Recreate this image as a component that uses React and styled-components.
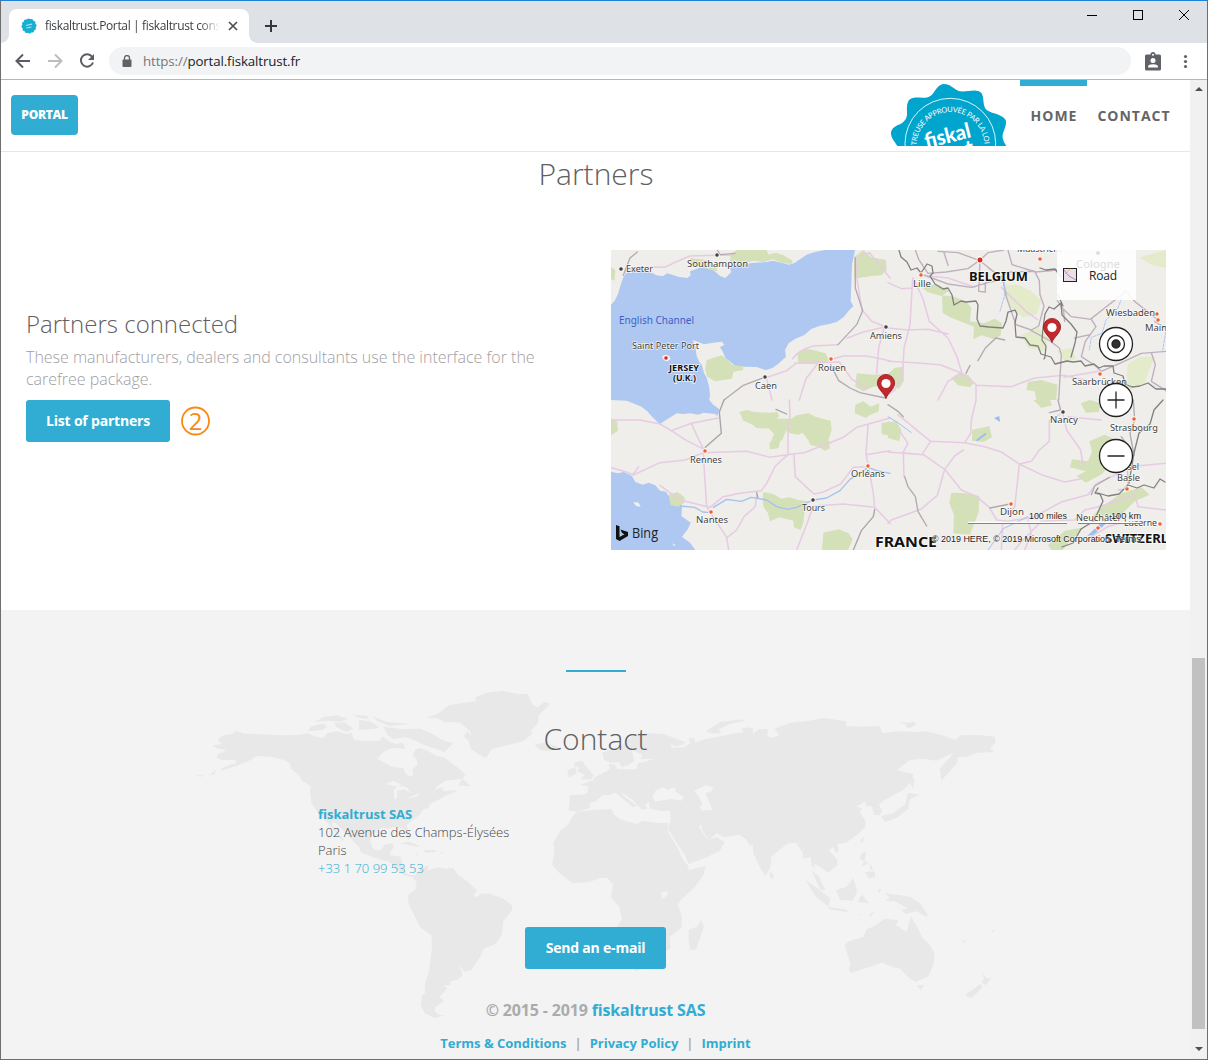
import React from "react";
import styled, { createGlobalStyle } from "styled-components";

const BLUE = "#31acd2";

const Global = createGlobalStyle`
  * { box-sizing: border-box; }
  body { margin: 0; background: #fff; }
  h1, h2, p { margin: 0; font-weight: 300; }
  a { color: inherit; text-decoration: none; }
  svg { display: block; }
`;

const Window = styled.div`
  width: 1208px;
  height: 1060px;
  display: flex;
  flex-direction: column;
  overflow: hidden;
  border: 1px solid #6e6e70;
  border-top-color: #1b82d6;
  font-family: "Open Sans", "Noto Sans", sans-serif;
`;

const TabStrip = styled.div`
  flex: none;
  height: 42px;
  display: flex;
  align-items: flex-start;
  padding: 8px 0 0 8px;
  background: #dee1e6;
`;

const Tab = styled.div`
  position: relative;
  width: 240px;
  height: 34px;
  display: flex;
  align-items: center;
  padding: 0 11px 0 12px;
  border-radius: 8px 8px 0 0;
  background: #fff;
  &::before,
  &::after {
    content: "";
    position: absolute;
    bottom: 0;
    width: 8px;
    height: 8px;
  }
  &::before { left: -8px; background: radial-gradient(circle at 0 0, transparent 7.5px, #fff 8px); }
  &::after { right: -8px; background: radial-gradient(circle at 100% 0, transparent 7.5px, #fff 8px); }
`;

const TabTitle = styled.span`
  width: 175px;
  margin: 0 8px 0 8px;
  overflow: hidden;
  white-space: nowrap;
  font: 12px/18px "Open Sans", sans-serif;
  letter-spacing: -0.36px;
  color: #3c4043;
  mask-image: linear-gradient(90deg, #000 155px, transparent 175px);
`;

const NewTab = styled.div`
  margin: 11px 0 0 16px;
`;

const WindowButtons = styled.div`
  margin-left: auto;
  display: flex;
  gap: 35px;
  padding: 0 17px 0 0;
`;

const Toolbar = styled.div`
  flex: none;
  height: 37px;
  display: flex;
  align-items: center;
  padding: 0 14px;
  border-bottom: 1px solid #b6b6b8;
  background: #fff;
`;

const NavIcons = styled.div`
  display: flex;
  gap: 16px;
  width: 94px;
`;

const AddressBar = styled.div`
  flex: 1;
  height: 28px;
  display: flex;
  align-items: center;
  gap: 11px;
  padding-left: 13px;
  border-radius: 14px;
  background: #f1f3f4;
  font: 13.3px/20px "Open Sans", sans-serif;
  letter-spacing: -0.12px;
  color: #202124;
  span { color: #74787c; }
`;

const ToolIcons = styled.div`
  display: flex;
  align-items: center;
  gap: 22px;
  margin-left: 14px;
  padding-right: 5px;
`;

const Viewport = styled.div`
  flex: 1;
  display: flex;
  min-height: 0;
`;

const Page = styled.main`
  width: 1189px;
  display: flex;
  flex-direction: column;
  background: #fff;
`;

const Header = styled.header`
  flex: none;
  height: 72px;
  display: flex;
  align-items: flex-start;
  justify-content: space-between;
  padding: 0 10px;
  border-bottom: 1px solid #e7e7e7;
`;

const PortalButton = styled.a`
  width: 67px;
  height: 40px;
  margin-top: 15px;
  border-radius: 4px;
  background: ${BLUE};
  color: #fff;
  text-align: center;
  font-size: 12px;
  font-weight: 800;
  line-height: 40px;
  letter-spacing: -0.3px;
`;

const Nav = styled.nav`
  display: flex;
`;

const NavItem = styled.a`
  width: ${(p) => p.$w}px;
  height: 50px;
  padding: 20px 0 0 1px;
  border-top: 6px solid ${(p) => (p.$active ? BLUE : "transparent")};
  color: #646567;
  text-align: center;
  white-space: nowrap;
  font-size: 14px;
  font-weight: 700;
  line-height: 20px;
  letter-spacing: 1px;
`;

const Title = styled.h1`
  text-align: center;
  font-size: 30px;
  font-weight: 300;
  line-height: 40px;
  color: #5f6062;
`;

const Partners = styled.section`
  flex: none;
  height: 458px;
  padding: 2px 24px 0 25px;
`;

const PartnersRow = styled.div`
  display: flex;
  align-items: center;
  justify-content: space-between;
  height: 300px;
  margin-top: 56px;
`;

const Info = styled.div`
  width: 560px;
  padding-bottom: 51px;
`;

const Subtitle = styled.h2`
  font-size: 24px;
  line-height: 34px;
  color: #5f6062;
`;

const Description = styled.p`
  margin: 5px 0 10px;
  font-size: 16px;
  line-height: 22px;
  letter-spacing: -0.01px;
  color: #9fa0a2;
`;

const Actions = styled.div`
  display: flex;
  align-items: center;
  gap: 11px;
`;

const Button = styled.a`
  width: ${(p) => p.$w}px;
  height: 42px;
  border-radius: 3px;
  background: ${BLUE};
  color: #fff;
  text-align: center;
  font-size: 14px;
  font-weight: 700;
  line-height: 42px;
  letter-spacing: -0.2px;
`;

const Contact = styled.section`
  position: relative;
  flex: 1;
  display: flex;
  flex-direction: column;
  align-items: center;
  padding-top: 60px;
  background: #f3f3f3;
`;

const WorldBackdrop = styled.svg`
  position: absolute;
  left: 189px;
  top: 70px;
  fill: #e8e8e8;
`;

const Rule = styled.div`
  width: 60px;
  height: 2px;
  margin-bottom: 47px;
  background: ${BLUE};
`;

const Layer = styled.div`
  position: relative;
  display: flex;
  flex-direction: column;
  align-items: center;
  width: 100%;
`;

const Address = styled.address`
  width: 555px;
  margin: 46px 0 50px;
  font-size: 13px;
  font-style: normal;
  font-weight: 300;
  line-height: 18px;
  color: #444547;
  a, strong { color: ${BLUE}; }
  strong { font-weight: 700; }
`;

const Copyright = styled.p`
  margin-top: 30px;
  font-size: 16px;
  font-weight: 700;
  line-height: 22px;
  letter-spacing: -0.16px;
  color: #aaabad;
  a { color: ${BLUE}; }
`;

const FooterLinks = styled.div`
  display: flex;
  gap: 8px;
  margin-top: 13px;
  font-size: 13px;
  font-weight: 700;
  line-height: 18px;
  letter-spacing: -0.02px;
  color: #aaabad;
  a { color: ${BLUE}; }
`;

const Scrollbar = styled.div`
  width: 17px;
  display: flex;
  flex-direction: column;
  align-items: center;
  background: #f1f1f1;
`;

const Arrow = styled.div`
  width: 0;
  height: 0;
  margin: ${(p) => (p.$up ? "7px 0 567px" : "18px 0 0")};
  border: solid transparent;
  border-width: ${(p) => (p.$up ? "0 4px 4px" : "4px 4px 0")};
  border-bottom-color: #505050;
  border-top-color: #505050;
`;

const Thumb = styled.div`
  width: 13px;
  height: 371px;
  margin-right: 1px;
  background: #c1c1c1;
`;

function Favicon() {
  return (
    <svg width="16" height="16" viewBox="-8 -8 16 16">
      <g fill="#17b0d3">
        {[0, 30, 60].map((a) => (
          <rect key={a} x="-5.8" y="-5.8" width="11.6" height="11.6" rx="1.6" transform={`rotate(${a + 10})`} />
        ))}
      </g>
      <path d="M-3 -.5L3-1.8M-2.5 2l5-1" stroke="#a8e2f0" strokeWidth="1.2" />
    </svg>
  );
}

function Seal() {
  return (
    <svg width="130" height="66" viewBox="890 80 130 66">
      <g transform="translate(840 0) scale(.33333)">
        <path fill="#00a5ce" d="M172 438C163 422 153 415 153 399C154 382 171 376 183 371C199 360 202 350 201 335C200 312 202 296 222 293C240 291 261 299 276 284C288 270 294 253 312 252C330 252 341 266 356 273C378 279 410 262 425 280C434 297 426 317 441 331C459 343 491 343 498 363C500 382 485 398 488 414Q491 428 499 438Z" />
        <circle cx="331" cy="431" r="136" fill="none" stroke="#fff" strokeWidth="2.6" />
      </g>
      <path id="seal-arc" d="M916.500 145.500A34 34 0 0 1 984.400 143.500L984.600 150" fill="none" />
      <text fill="#fff" fontFamily="Lato, sans-serif" fontSize="7.4">
        <textPath href="#seal-arc" textLength="104" lengthAdjust="spacing">TREUSE APPROUVÉE PAR LA LOI</textPath>
      </text>
      <g fill="#fff" fontFamily="Lato, sans-serif" fontWeight="900" transform="rotate(-14 948 140)">
        <text x="925" y="143" fontSize="21" textLength="47" lengthAdjust="spacingAndGlyphs">fiskal</text>
        <text x="927" y="160" fontSize="21" textLength="44" lengthAdjust="spacingAndGlyphs">trust</text>
      </g>
    </svg>
  );
}

const places = [
  ["Exeter", 626, 272, 27, 621, 269, "#444"],
  ["Southampton", 687, 267, 61, 717, 255, "#444"],
  ["Saint Peter Port", 632, 349, 67, 666, 358, "#e02a1c"],
  ["Amiens", 870, 339, 32, 886, 327, "#444"],
  ["Rouen", 818, 371, 28, 831, 359, "#f2622e"],
  ["Caen", 755, 389, 22, 765, 377, "#444"],
  ["Rennes", 690, 463, 32, 705, 451, "#f2622e"],
  ["Nantes", 696, 523, 32, 711, 512, "#f2622e"],
  ["Tours", 802, 511, 23, 813, 500, "#444"],
  ["Orléans", 851, 477, 34, 868, 466, "#f2622e"],
  ["Lille", 913, 287, 18, 921, 275, "#f2622e"],
  ["Maastricht", 1017, 252, 45, 1040, 259, "#f2622e"],
  ["Wiesbaden", 1106, 316, 49, 1157, 314, "#f2622e"],
  ["Main", 1145, 331, 22, 1158, 320, "#f2622e"],
  ["Saarbrücken", 1072, 385, 55, 1100, 374, "#f2622e"],
  ["Nancy", 1050, 423, 28, 1063, 412, "#444"],
  ["Strasbourg", 1110, 431, 48, 1134, 419, "#f2622e"],
  ["Basel", 1117, 470, 22, 0, 0, "none"],
  ["Basle", 1117, 481, 23, 1127, 489, "#f2622e"],
  ["Dijon", 1000, 515, 24, 1011, 504, "#f2622e"],
  ["Neuchâtel", 1076, 521, 44, 1098, 528, "#f2622e"],
  ["Lucerne", 1124, 526, 33, 1160, 524, "#f2622e"],
];

const Pin = ({ x, y }) => (
  <g transform={`translate(${x} ${y})`}>
    <path d="M0 0C-2-6-8.600-9-8.600-15.500A8.600 8.600 0 0 1 8.600-15.500C8.600-9 2-6 0 0Z" fill="#c1292e" stroke="#98191f" strokeWidth=".8" />
    <circle cy="-15" r="4.600" fill="#fff" />
  </g>
);

function BingMap() {
  return (
    <svg width="555" height="300" viewBox="611 250 555 300" fontFamily='"Noto Sans", "Open Sans", sans-serif'>
      <rect x="611" y="250" width="555" height="300" fill="#efeeeb" />
      <g transform="translate(610 248) scale(.33333)">
        <path fill="#aec8f2" d="M3 170L14 158L24 138L34 105L40 88L52 70L68 62L88 66L106 64L120 72L140 82L158 85L172 76L205 86L232 90L242 82L240 70L262 62L285 52L306 62L330 84L346 90L364 72L360 62L380 50L405 48L435 44L470 42L488 38L514 44L536 50L552 46L570 34L590 20L615 12L645 6L735 6L726 50L722 160L730 175L716 188L702 206L680 222L655 229L630 233L604 243L583 261L556 272L536 286L525 306L528 326L505 347L486 361L466 366L440 357L402 356L378 356L362 342L346 330L338 310L330 298L343 290L336 281L310 284L282 289L262 281L248 276L256 295L260 325L268 342L276 352L282 375L290 390L297 415L300 440L298 456L310 470L328 484L322 504L316 498L280 494L265 500L240 496L220 498L200 496L184 506L162 520L150 528L140 520L125 505L112 490L95 476L75 468L50 458L3 456Z" />
        <path fill="#f3f2ef" d="M156 325l10-5 12 4 3 9-8 7-11-4Z" />
        <path fill="#d4e0b8" d="M360 42L362 20L380 6L470 6L475 20L498 14L520 22L548 38L545 48L520 46L488 34L460 42L435 38L400 44ZM290 336L335 322L362 344L368 352L398 354L400 366L370 372L366 392L340 396L315 400L290 385L286 362ZM732 28L760 6L784 28L828 36L830 66L815 82L785 84L732 92ZM562 316L592 302L618 308L646 316L658 340L635 347L605 348L565 344ZM740 376L790 380L840 378L836 410L790 416L760 430L736 416ZM3 58L16 66L14 98L3 94ZM240 30L290 36L318 52L322 70L290 62L245 52Z" />
      </g>
      <g transform="translate(610 400) scale(.33333)">
        <path fill="#aec8f2" d="M3 215L24 220L42 216L66 228L76 246L98 254L116 248L136 256L150 272L168 275L178 290L204 302L216 322L214 348L242 368L234 386L216 410L240 428L256 450L3 450Z" />
        <path fill="#f1f0ed" d="M70 306l16 2 6 12-14-2ZM184 430l12 4-2 5Z" />
        <path fill="#d4e0b8" d="M388 36L410 30L432 36L475 38L502 36L508 48L500 56L544 56L560 46L596 40L616 50L662 62L665 90L656 118L660 145L645 152L625 140L600 134L596 122L578 98L565 104L540 100L528 92L518 118L510 125L505 145L480 148L478 130L484 122L492 102L478 86L440 84L428 74L400 62ZM176 284L202 276L224 292L222 310L206 320L182 316ZM460 276L490 282L514 296L540 292L565 300L596 304L584 332L580 370L572 390L552 382L550 362L508 352L480 364L474 340L460 320L458 296ZM640 398L686 388L716 400L728 418L714 450L636 450ZM736 14L760 4L782 20L808 10L806 34L778 46L768 54L734 40ZM814 70L840 64L840 108L815 102ZM3 54L22 66L24 92L3 106Z" />
      </g>
      <g transform="translate(888 248) scale(.33333)">
        <path fill="#d4e0b8" d="M162 142L200 146L236 162L250 180L246 220L288 226L320 212L342 226L338 262L320 274L280 262L256 274L258 236L222 222L186 208L164 194ZM90 108L150 110L184 128L160 144L118 132ZM190 390L214 374L242 382L258 404L246 418L210 412ZM0 378L20 360L46 356L48 398L32 424L18 410ZM420 402L460 396L508 410L505 456L445 456L440 430L415 426Z" />
        <path fill="#e3ebca" d="M350 110L390 110L430 130L460 160L445 200L405 208L370 180L348 140ZM720 348L756 326L800 326L780 376L770 410L722 412L716 382ZM400 262L450 238L480 270L470 308L420 300ZM754 28L834 6L834 60L790 50ZM690 396L742 404L730 428L684 422ZM550 300L565 334L530 340L506 308Z" />
      </g>
      <g transform="translate(888 400) scale(.33333)">
        <path fill="#d4e0b8" d="M190 278L234 280L274 288L272 336L260 368L246 404L196 400L198 344L184 310ZM252 90L304 78L312 112L286 126L252 122ZM0 68L24 62L40 90L34 124L0 114ZM552 178L600 184L612 156L604 124L650 104L680 118L684 144L666 196L642 222L594 248L566 228L594 214L546 202ZM578 10L606 0L640 10L632 36L594 38ZM642 320L700 280L760 262L785 284L740 304L690 354L650 362L614 348ZM480 436L530 392L590 382L548 420L524 450L490 450ZM436 0L486 0L492 16L460 24Z" />
        <path fill="#9bbcf0" d="M264 120l28-22 2 6-26 20ZM598 408l34-34 22-14 2 8-38 36ZM318 54l16-6 2 18Z" />
      </g>

      <g fill="none" strokeLinejoin="round" strokeLinecap="round">
        <g transform="translate(610 248) scale(.33333)" stroke="#e7cbe3" strokeWidth="4.600">
          <path d="M50 62Q110 55 165 58Q195 42 240 24L318 22L370 22M736 30L742 100L756 185L785 220L826 236M712 270L760 252L822 238M548 332Q565 306 610 294L684 290M554 346L622 344L688 342L726 394L770 420M465 390L530 368L556 348M470 392L486 456M622 348L588 392L568 456M665 334L700 324L770 324L840 338M822 240L806 300L800 376M780 16L840 90M736 28L780 14" />
          <path stroke="#b5a9b3" strokeWidth="4" d="M322 6L330 20L375 16M40 82L60 30L82 12M342 456L400 412L464 388M684 290L740 230L758 188L736 120L736 30M662 350L686 398L720 420L750 434L826 450" />
        </g>
        <g transform="translate(610 400) scale(.33333)" stroke="#e7cbe3" strokeWidth="4.600">
          <path d="M3 60L90 60L150 72L184 92L230 122L278 146M184 92L244 70L326 54M244 70L262 110L280 146M0 202L50 216L70 225L150 188L226 180L280 158L410 154L480 172L532 164L582 158L660 128L700 112L740 82L840 54M70 222L86 200M280 158L284 230L290 320L300 336L350 412L356 450M538 0L540 45L534 90L534 164L496 198L470 250L454 272L390 280L340 290L300 322M552 166L556 230L590 262L612 282L640 276L692 252L730 202L775 200M775 200L768 160L774 76M776 202L790 280L794 322L700 312L610 318L592 368L560 450M794 322L840 370M300 322L210 300L150 256M440 286L436 320L402 350L380 390L352 412M768 164L840 152" />
          <path stroke="#aaa2a9" strokeWidth="4" d="M342 0L328 36L334 100L286 142M498 28L530 42M794 328L790 350L754 392L730 450M440 278L444 294" />
          <path stroke="#a4c1ef" strokeWidth="4" d="M210 318L254 322L278 336L300 338M310 322L350 298L394 304L424 292L470 300L500 320L532 328L560 322L610 300L650 294L690 272L720 238L775 202L800 212L840 220" />
        </g>
        <g transform="translate(888 248) scale(.33333)" stroke="#e7cbe3" strokeWidth="4.600">
          <path d="M0 240L60 246L120 244L180 258M76 90L104 150L124 220L180 270L206 324L222 376L180 400L150 456M74 92L66 230L48 300L44 380L20 426L0 440M0 340L80 344L156 350L222 376L264 410L264 456M264 412L370 416L440 390L528 382L600 398M0 104L40 122L72 120M104 82L180 90L260 118M340 118L416 192L448 214M528 388L640 368" />
          <path stroke="#bfb0be" strokeWidth="4.200" d="M120 76L174 72L240 62L276 36L300 14L348 6M276 38L272 130L292 132L292 104L320 100L360 72L440 70L454 98L456 140L468 174L452 234L430 246L384 230L356 150L344 92L300 58L276 38L210 14L150 10M104 80L180 108L250 118L300 104M360 6L372 50L444 72L508 66M430 248L482 276L514 300L520 320L512 456M520 178L550 206L610 214L624 236L592 280L580 326L620 352L640 370L700 344L760 316L834 310M610 212L650 180L714 130L740 160L810 216M800 220L834 242M790 314L802 350L790 400L834 428M560 270L606 260M508 158L526 184L530 220M180 52L168 14M120 76L92 34L82 6" />
          <path stroke="#b0aab0" strokeWidth="4" d="M350 276L324 270L292 300L270 338M246 352L234 376" />
          <path stroke="#a9c8ef" strokeWidth="3" strokeDasharray="9 4" d="M346 70L350 142L336 190M710 126L690 180L654 216L642 256L610 268L604 306M834 250L824 306" />
        </g>
        <g transform="translate(888 400) scale(.33333)" stroke="#e7cbe3" strokeWidth="4.600">
          <path d="M0 156L46 160L106 164L170 208L220 270L266 290L304 322L326 360L360 364M30 44L88 92L128 124L230 128L290 140L340 156L394 192L388 250L380 322L366 332M44 160L60 130L34 92M128 124L104 160M106 164L46 158L48 230M170 208L148 286L98 328L10 360L0 370M230 128L248 100L250 60L264 0M172 206L200 168L226 150M394 192L430 184L454 150L484 124L484 62L524 38M394 192L460 224L530 246L580 236M524 38L536 90L578 150L586 198M360 364L440 350L520 306L600 284L626 250L684 224L720 200L834 190M344 368L340 450M460 364L560 360L590 330L640 318L740 284L750 320L834 330M610 410L660 380L700 368M540 50L640 60M380 450L396 430L460 364M420 360L430 400L410 450" />
          <path stroke="#b0abb0" strokeWidth="4" d="M0 14L30 34L46 50M50 230L60 260L82 290L90 334L116 378M306 324L366 312M484 38L518 30L510 0M736 0L740 60L726 100L738 166M720 140L700 110M610 284L620 258L664 232" />
          <path stroke="#a4c1ef" strokeWidth="3" d="M0 50L30 68L70 98M300 450L346 386L420 350M718 180L720 250L716 268L690 270" />
        </g>
        <g stroke="#808080" strokeWidth="1.300">
          <path d="M899 250l2 7 6 5 4 8 6-2 4 5 6-9 5 2 1 7-3 3 5 8 8 5 5-1 4 7 2 10 7-4 5 1 10-1 2 4-1 14 3 7 9 1 14 1 3-7 2-9 7-2 2 4-2 9 1 14 9 1 5 7 8 1 3 8 10 3 4 7 12-3 6 1 8-1 4 5 9-2 5 4 5-2 9 0 1 7 9 3 2 8 7 3 8-1 8-3 8 6 10 0 5 5 8 2 10 1-1 10" />
          <path d="M1061 303l-7 6-5-2-4 7-2 14-1 12 4 6-1 11-1 2M1061 303l1 12 9 9 6 8-2 11-4 14M1058 295l5 11M1040 268l6 2 9-1 6 8" />
          <path d="M1098 488l-3 5 5 1 3 7-9 20-13 8-8 14-11 4M1098 493l10 3 11-2 9-9 9 3 7-3 10 3 6-9 5 3M1163 400l-9 10-4 14-11 9-5 20-5 30" />
        </g>
      </g>

      {places.map(([name, x, y, w, cx, cy, color]) => (
        <g key={name}>
          <circle cx={cx} cy={cy} r="2.300" fill={color} stroke="#fff" strokeWidth={color === "none" ? 0 : 1} />
          <text x={x} y={y} textLength={w} lengthAdjust="spacingAndGlyphs" fontSize="9.500" fill="#3f3f3f" stroke="#fff" strokeOpacity=".75" strokeWidth="1.5" paintOrder="stroke">{name}</text>
        </g>
      ))}
      <circle cx="980" cy="260" r="3.100" fill="#e02a1c" stroke="#fff" />
      <text x="619" y="324" fontSize="10.500" textLength="75" lengthAdjust="spacingAndGlyphs" fill="#3c5fc4">English Channel</text>
      <g fontWeight="700" fill="#111" stroke="#fff" strokeOpacity=".8" strokeWidth="1.600" paintOrder="stroke">
        <text x="669" y="371" fontSize="9.500" textLength="30" lengthAdjust="spacingAndGlyphs">JERSEY</text>
        <text x="673" y="381" fontSize="9.500" textLength="23" lengthAdjust="spacingAndGlyphs">(U.K.)</text>
        <text x="969" y="281" fontSize="13" textLength="59" lengthAdjust="spacingAndGlyphs">BELGIUM</text>
        <text x="875" y="547" fontSize="15" textLength="62" lengthAdjust="spacingAndGlyphs">FRANCE</text>
        <text x="1105" y="543" fontSize="13" textLength="63" lengthAdjust="spacingAndGlyphs">SWITZERL</text>
      </g>

      <rect x="1057" y="250" width="79" height="50" fill="#fff" fillOpacity=".88" />
      <circle cx="1098" cy="253" r="2" fill="#ddd" />
      <text x="1076" y="268" fontSize="11" textLength="44" fill="#dcdcdc">Cologne</text>
      <rect x="1063.500" y="268.500" width="13" height="13" fill="#e9e0e7" stroke="#222" />
      <path d="M1065 274q5-5 6-5" fill="none" stroke="#edc66c" />
      <path d="M1064 270q4 7 12 10" fill="none" stroke="#b881cf" />
      <text x="1089" y="280" fontSize="12" textLength="28" fill="#222" fontFamily='"Open Sans", sans-serif'>Road</text>

      <Pin x={886} y={398.5} />
      <Pin x={1052} y={342.5} />

      <g fill="#fff" stroke="#222" strokeWidth="1.300">
        <circle cx="1116" cy="344" r="16.500" />
        <circle cx="1116" cy="400" r="16.500" />
        <circle cx="1116" cy="456" r="16.500" />
        <circle cx="1116" cy="344" r="8.500" />
        <circle cx="1116" cy="344" r="4" fill="#333" />
        <path d="M1107.500 400h17M1116 391.500v17M1107.500 456h17" />
      </g>

      <path d="M616 525l3.500 1.300v10.700l5-2.800-2.500-1.200-1.500-3.600 7.500 2.700v4l-8.500 5-3.500-2Z" fill="#111" />
      <text x="632" y="538" fontSize="14" textLength="26" lengthAdjust="spacingAndGlyphs" fill="#222" fontFamily='"Open Sans", sans-serif'>Bing</text>

      <path d="M968 522.500h99M1078 522.500h63" stroke="#fff" strokeWidth="1.500" />
      <path d="M968 523.500h99M1078 523.500h63" stroke="#4a8de8" />
      <g fontFamily='"Liberation Sans", Arial, sans-serif' fill="#222" stroke="#fff" strokeOpacity=".6" strokeWidth="1.200" paintOrder="stroke" fontSize="9.500">
        <text x="1029" y="519" textLength="38" lengthAdjust="spacingAndGlyphs">100 miles</text>
        <text x="1111" y="519" textLength="30" lengthAdjust="spacingAndGlyphs">100 km</text>
        <text x="932" y="542" textLength="178" lengthAdjust="spacingAndGlyphs">© 2019 HERE, © 2019 Microsoft Corporation</text>
        <text x="1115" y="542" textLength="26" lengthAdjust="spacingAndGlyphs">Terms</text>
      </g>
    </svg>
  );
}

function WorldMap() {
  return (
    <WorldBackdrop width="830" height="350" viewBox="190 680 830 350">
      <g transform="translate(190 680) scale(.33333)">
        <path d="M68 196L96 192L82 180L100 166L126 162L140 153L160 161L220 163L270 166L325 165L356 160L370 168L400 174L412 160L440 154L468 162L485 158L492 180L530 184L568 182L578 170L600 186L618 192L640 186L645 208L625 204L600 206L580 216L562 236L580 246L610 262L640 264L646 280L660 290L670 284L668 268L682 254L680 236L668 228L676 208L692 204L715 214L740 228L762 232L785 250L810 268L826 284L818 296L790 300L768 302L742 318L735 330L756 322L762 334L798 330L795 336L765 348L740 362L720 372L716 384L698 390L692 402L664 424L650 436L656 454L662 472L656 480L645 462L638 446L615 440L600 446L580 444L562 450L545 462L541 484L548 504L560 512L576 508L584 494L606 490L612 500L602 516L600 526L632 530L636 548L640 570L654 584L676 586L678 592L660 590L640 584L622 570L600 546L575 540L546 530L514 518L506 500L478 472L454 446L432 426L425 432L446 462L464 480L456 482L440 462L424 440L404 420L384 398L364 370L360 330L362 318L336 302L326 284L304 268L300 250L282 240L240 230L205 228L192 232L182 240L168 246L140 258L92 272L100 262L140 248L134 240L96 240L80 234L84 222L110 210L84 206Z" />
        <path d="M18 286h22l-8 4ZM58 284l20-14-4 14ZM354 154L362 140L400 130L412 140L396 150ZM374 126L400 112L440 106L474 116L450 126L416 122ZM492 104L536 108L530 118L500 112ZM546 108L590 126L660 132L600 138L560 122ZM508 120L540 124L566 140L558 146L506 150ZM580 140L640 148L690 146L728 162L756 180L790 190L764 216L736 206L700 194L680 184L650 172L610 178L592 164ZM432 130L462 126L490 146L470 156L440 142ZM346 288L374 308L366 314L350 300ZM804 316L818 296L842 318L826 318Z" />
        <path d="M710 114L748 98L776 76L812 70L858 64L856 52L890 38L940 33L985 42L1014 42L1026 72L1042 82L1060 68L1080 72L1046 106L1044 130L1024 150L1026 162L1000 184L950 196L906 208L888 234L864 222L842 206L836 184L820 168L834 154L844 170L842 156L812 128L764 126L740 114ZM1034 194L1060 188L1106 200L1080 214L1046 206ZM630 490Q660 478 692 502Q650 494 630 490ZM702 510L734 510L738 516L706 518ZM676 518l8 4-6 4ZM752 514l8 4-6 4Z" />
        <path d="M668 596L690 566L716 556L712 572L746 562L764 566L790 564L804 584L832 604L862 632L850 644L860 652L874 640L900 642L940 656L966 676L966 692L940 722L936 764L916 792L882 806L874 824L858 850L844 870L824 876L808 856L818 884L806 898L780 904L782 914L762 916L772 926L748 950L762 962L736 982L734 992L744 1004L764 1006L734 1014L704 1000L692 976L696 946L706 940L704 914L718 870L726 800L724 766L690 742L656 672L654 646L676 628L680 604Z" />
        <path fill="#f3f3f3" d="M588 312L610 302L634 314L620 320ZM612 356L612 330L624 318L650 322L662 340L644 328L622 332L620 356ZM648 356L690 338L680 350ZM640 170L680 186L670 200L634 190Z" />
      </g>
      <g transform="translate(540 690) scale(.33333)">
        <path d="M120 284L162 270L160 264L210 238L206 222L224 222L232 238L290 238L294 220L346 206L302 208L306 194L276 180L282 214L264 226L246 232L236 216L214 218L192 210L186 188L240 170L280 136L324 130L370 132L436 156L432 162L406 170L394 162L394 174L430 172L450 162L448 144L464 146L464 158L498 146L536 140L574 132L612 126L604 116L622 112L640 116L638 132L656 118L684 118L682 136L692 144L718 136L704 116L750 98L806 92L850 84L920 94L918 108L960 110L1020 108L1026 130L1080 124L1130 126L1160 124L1206 136L1246 150L1264 136L1324 136L1364 140L1366 158L1350 176L1362 186L1310 188L1280 200L1252 202L1252 218L1204 272L1200 236L1230 200L1240 188L1190 212L1150 206L1110 210L1070 240L1120 252L1114 274L1090 300L1060 316L1028 334L1016 344L1026 362L1020 376L1002 374L996 350L976 346L978 334L948 350L966 354L960 370L976 390L976 410L950 436L918 458L892 462L896 480L888 490L880 472L866 480L890 506L892 526L864 548L836 528L822 522L826 540L814 524L812 500L790 506L788 488L768 458L740 462L694 500L692 530L676 558L656 524L640 490L638 464L628 466L618 448L598 434L552 442L530 430L508 450L488 424L484 404L476 410L496 440L508 450L530 440L554 456L540 482L500 502L446 522L436 498L384 418L392 392L390 362L362 362L330 356L326 334L316 346L322 356L306 360L278 330L240 304L252 318L292 348L278 352L256 332L226 308L206 316L190 314L166 334L148 340L150 354L112 366L86 360L90 316L140 312L146 290Z" />
        <path d="M112 366L158 360L214 356L222 374L240 388L290 402L306 392L350 398L386 400L382 422L410 468L430 510L446 530L444 540L498 528L490 556L462 594L422 630L414 644L426 680L424 714L388 740L392 774L370 790L330 830L285 844L260 780L232 712L246 686L238 652L212 620L220 584L202 564L180 564L148 576L98 580L58 548L36 524L44 484L40 460L62 420L84 404L96 380ZM446 720L470 710L484 690L492 710L468 778L450 780L446 750ZM82 240L106 232L110 250L86 264ZM102 218L126 212L140 232L162 256L154 268L122 268L134 254L112 244L118 232L104 230ZM0 52L14 36L30 40L18 54L0 64ZM0 164L36 178L8 182L0 180ZM498 124L540 96L606 88L614 92L570 102L536 118L544 130L510 130ZM1074 96L1100 98L1124 96L1128 104L1110 114L1096 112L1100 104ZM1112 248l12 24-6 26-8-22ZM1104 308L1138 314L1110 328L1104 358L1070 384L1034 396L1024 378L1060 370L1078 354L1094 346ZM690 546l10 6 0 14-10-2ZM962 450l10-10-2 14-8 6ZM966 490l12-6-4 30 12 4-22 14 8-18-14-10ZM974 546l30-2 2 16-18 6ZM990 520l10 20-10-2ZM814 542L836 558L856 600L842 600ZM796 570L820 586L870 624L866 650L826 618ZM864 650L924 660L920 666L868 658ZM888 600L920 590L940 564L952 604L938 632L900 630ZM960 620L990 602L966 614L988 640L954 636ZM1014 596l10 2-8 14ZM990 670l16-4-16 14ZM1034 610L1080 616L1110 620L1140 640L1164 676L1158 680L1130 664L1096 672L1084 658L1104 656L1064 634L1036 632L1050 622ZM958 670l6 4-4 4Z" />
        <path d="M914 766L926 754L970 740L980 718L1004 708L1034 686L1074 690L1068 706L1100 726L1112 680L1132 710L1146 742L1170 764L1184 792L1180 826L1164 860L1126 876L1100 858L1082 836L1060 832L1026 818L960 840L934 850L926 840L932 824ZM1130 886L1152 884L1144 902ZM1324 844L1338 864L1354 866L1336 886L1324 876L1332 866ZM1278 912L1300 898L1320 882L1328 890L1296 924L1280 920ZM1352 728l14-12-4 10ZM1264 750l14 4-4 6Z" />
        <path fill="#f3f3f3" d="M338 320L346 302L370 292L382 300L404 292L408 306L432 322L424 332L396 326L360 332L344 334ZM462 302L496 286L520 292L514 304L496 310L504 328L518 360L486 362L478 350L488 344L476 318ZM364 608L382 604L382 614L368 628Z" />
      </g>
    </WorldBackdrop>
  );
}

export default function App() {
  return (
    <Window>
      <Global />
      <TabStrip>
        <Tab>
          <Favicon />
          <TabTitle>fiskaltrust.Portal | fiskaltrust consulting</TabTitle>
          <svg width="10" height="10" viewBox="0 0 10 10" stroke="#4b4f54" strokeWidth="1.7">
            <path d="M1 1l8 8M9 1l-8 8" />
          </svg>
        </Tab>
        <NewTab>
          <svg width="12" height="12" viewBox="0 0 12 12" stroke="#35383b" strokeWidth="2">
            <path d="M0 6h12M6 0v12" />
          </svg>
        </NewTab>
        <WindowButtons>
          <svg width="11" height="12" viewBox="0 0 11 12" stroke="#000"><path d="M0 6.500h10" /></svg>
          <svg width="11" height="12" viewBox="0 0 11 12" stroke="#000" fill="none"><rect x=".5" y="1.500" width="9" height="9" /></svg>
          <svg width="11" height="12" viewBox="0 0 11 12" stroke="#000"><path d="M0 1l10 10M10 1l-10 10" /></svg>
        </WindowButtons>
      </TabStrip>
      <Toolbar>
        <NavIcons>
          <svg width="16" height="16" viewBox="0 0 16 16" fill="none" stroke="#5a5d62" strokeWidth="2"><path d="M15 8H2M8 1.500L1.500 8L8 14.500" /></svg>
          <svg width="16" height="16" viewBox="0 0 16 16" fill="none" stroke="#bcbdbf" strokeWidth="2"><path d="M1 8h13M8 1.500L14.500 8L8 14.500" /></svg>
          <svg width="16" height="16" viewBox="0 0 16 16" fill="none" stroke="#5a5d62" strokeWidth="2"><path d="M13.300 4A6.200 6.200 0 1 0 14 9.500" /><path d="M15 1v6H9Z" fill="#5a5d62" stroke="none" /></svg>
        </NavIcons>
        <AddressBar>
          <svg width="10" height="13" viewBox="0 0 10 13"><rect y="4.500" x=".5" width="9" height="7.500" rx="1" fill="#5f6368" /><path d="M2.500 5V3a2.500 2.500 0 0 1 5 0v2" fill="none" stroke="#5f6368" strokeWidth="1.300" /></svg>
          <div><span>https://</span>portal.fiskaltrust.fr</div>
        </AddressBar>
        <ToolIcons>
          <svg width="16" height="19" viewBox="0 0 16 19">
            <path fill="#5f6368" d="M1.500 2.500H5.500A2.500 2.500 0 0 1 10.500 2.500H14.500Q16 2.500 16 4V17Q16 18.500 14.500 18.500H1.500Q0 18.500 0 17V4Q0 2.500 1.500 2.500Z" />
            <circle cx="8" cy="2.700" r="1" fill="#fff" />
            <circle cx="8" cy="8.500" r="2.500" fill="#fff" />
            <path d="M3 15.500V14.500Q3.500 12.300 8 12.300Q12.500 12.300 13 14.500V15.500Z" fill="#fff" />
          </svg>
          <svg width="5" height="15" viewBox="0 0 5 15" fill="#5f6368"><circle cx="2.500" cy="2.500" r="1.600" /><circle cx="2.500" cy="7.500" r="1.600" /><circle cx="2.500" cy="12.500" r="1.600" /></svg>
        </ToolIcons>
      </Toolbar>
      <Viewport>
        <Page>
          <Header>
            <PortalButton>PORTAL</PortalButton>
            <Nav>
              <Seal />
              <NavItem $active $w={67}>HOME</NavItem>
              <NavItem $w={93}>CONTACT</NavItem>
            </Nav>
          </Header>
          <Partners>
            <Title>Partners</Title>
            <PartnersRow>
              <Info>
                <Subtitle>Partners connected</Subtitle>
                <Description>These manufacturers, dealers and consultants use the interface for the<br />carefree package.</Description>
                <Actions>
                  <Button $w={144}>List of partners</Button>
                  <svg width="30" height="30" viewBox="0 0 30 30">
                    <circle cx="14.500" cy="15" r="13.500" fill="none" stroke="#fa8a14" strokeWidth="1.800" />
                    <text x="14.500" y="23.500" textAnchor="middle" fontSize="24" fill="#fa8a14" fontFamily='"Open Sans", sans-serif'>2</text>
                  </svg>
                </Actions>
              </Info>
              <BingMap />
            </PartnersRow>
          </Partners>
          <Contact>
            <WorldMap />
            <Layer>
              <Rule />
              <Title>Contact</Title>
              <Address>
                <strong>fiskaltrust SAS</strong><br />
                102 Avenue des Champs-Élysées<br />
                Paris<br />
                <a>+33 1 70 99 53 53</a>
              </Address>
              <Button $w={141}>Send an e-mail</Button>
              <Copyright>© 2015 - 2019 <a>fiskaltrust SAS</a></Copyright>
              <FooterLinks><a>Terms &amp; Conditions</a><span>|</span><a>Privacy Policy</a><span>|</span><a>Imprint</a></FooterLinks>
            </Layer>
          </Contact>
        </Page>
        <Scrollbar>
          <Arrow $up />
          <Thumb />
          <Arrow />
        </Scrollbar>
      </Viewport>
    </Window>
  );
}
